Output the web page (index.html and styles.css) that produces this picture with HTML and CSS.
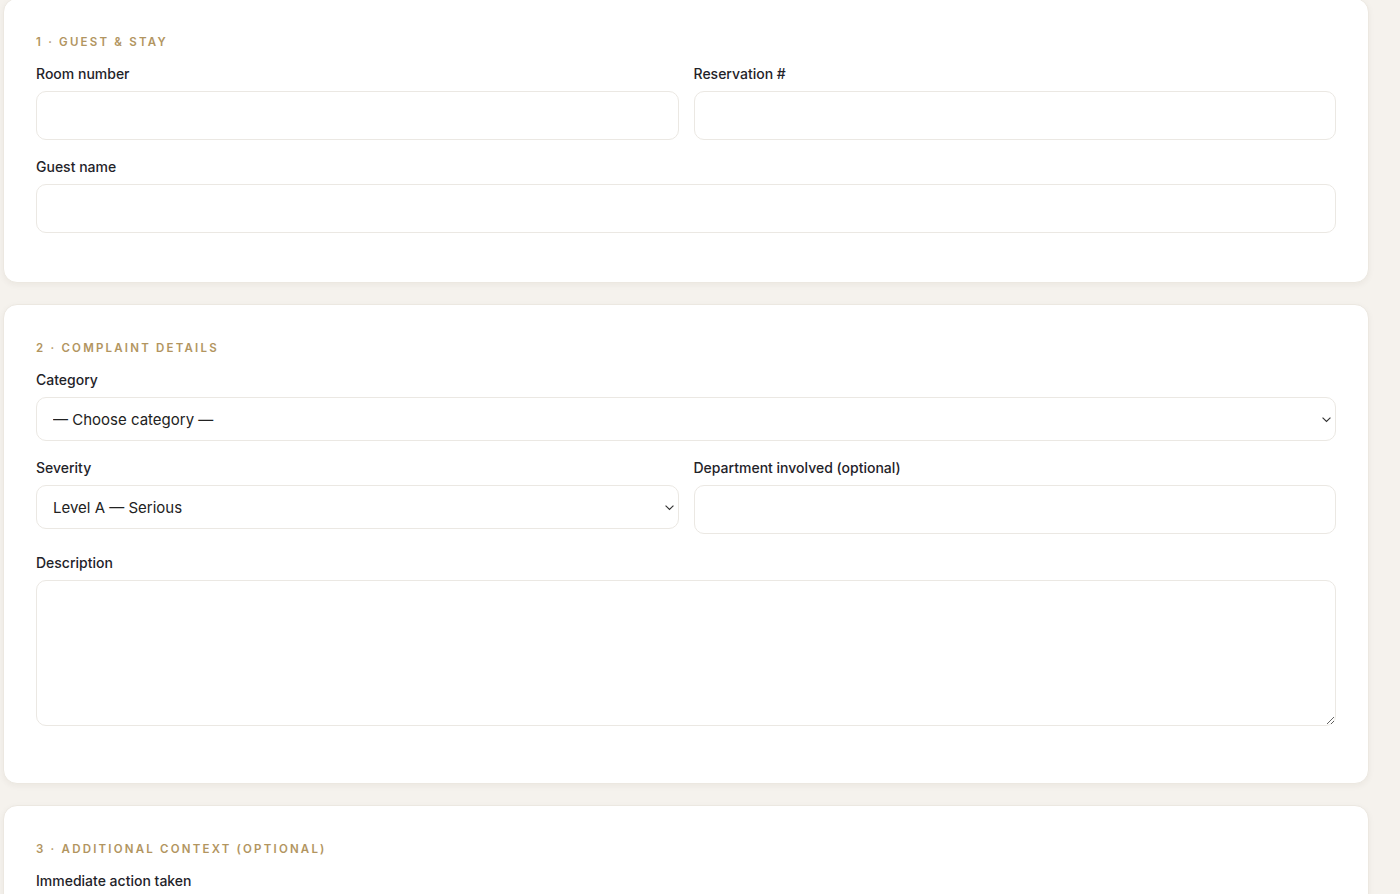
FILE: index.html
```html
<!DOCTYPE html>
<html lang="en">
<head>
<meta charset="utf-8">
<title>Complaint form</title>
<link rel="stylesheet" href="styles.css">
</head>
<body>
<main class="page">
  <section class="card">
    <h2 class="section-title">1 · Guest &amp; Stay</h2>
    <div class="row two">
      <div class="field">
        <label class="label">Room number</label>
        <input class="input" type="text">
      </div>
      <div class="field">
        <label class="label">Reservation #</label>
        <input class="input" type="text">
      </div>
    </div>
    <div class="field">
      <label class="label">Guest name</label>
      <input class="input" type="text">
    </div>
  </section>

  <section class="card">
    <h2 class="section-title">2 · Complaint details</h2>
    <div class="field">
      <label class="label">Category</label>
      <select class="select"><option>— Choose category —</option></select>
    </div>
    <div class="row two row-loose">
      <div class="field">
        <label class="label">Severity</label>
        <select class="select"><option>Level A — Serious</option></select>
      </div>
      <div class="field">
        <label class="label">Department involved (optional)</label>
        <input class="input" type="text">
      </div>
    </div>
    <div class="field">
      <label class="label">Description</label>
      <textarea class="textarea"></textarea>
    </div>
  </section>

  <section class="card">
    <h2 class="section-title">3 · Additional context (optional)</h2>
    <div class="field">
      <label class="label">Immediate action taken</label>
      <input class="input" type="text">
    </div>
  </section>
</main>
</body>
</html>
```

FILE: styles.css
```css
* { box-sizing: border-box; }
html, body { margin: 0; padding: 0; }
body {
  background: #f5f2ed;
  font-family: Inter, "Noto Sans", "Liberation Sans", sans-serif;
  color: #1f2329;
  overflow: hidden;
}
.page {
  padding: 0 31px 40px 3px;
  margin-top: -2px;
  display: flex;
  flex-direction: column;
  gap: 21px;
}
.card {
  background: #ffffff;
  border: 1px solid #ece8e1;
  border-radius: 14px;
  padding: 32px;
  box-shadow: 0 2px 6px rgba(60, 45, 20, 0.05);
}
.section-title {
  margin: 0 0 11px 0;
  font-size: 11.5px;
  line-height: 22px;
  font-weight: 600;
  letter-spacing: 2.2px;
  text-transform: uppercase;
  color: #b2955f;
}
.row.two {
  display: grid;
  grid-template-columns: 1fr 1fr;
  column-gap: 15px;
  align-items: start;
}
.row-loose { margin-bottom: 2px; }
.field {
  display: flex;
  flex-direction: column;
  margin-bottom: 17px;
}
.label {
  font-size: 14px;
  line-height: 20px;
  font-weight: 500;
  color: #1f2329;
  margin-bottom: 7px;
}
.input {
  height: 49px;
  border: 1px solid #ebe8e3;
  border-radius: 10px;
  background: #fff;
  font: inherit;
  font-size: 15px;
  padding: 0 16px;
  outline: none;
}
.select {
  height: 44px;
  border: 1px solid #ebe8e3;
  border-radius: 10px;
  background: #fff url("data:image/svg+xml;utf8,<svg xmlns='http://www.w3.org/2000/svg' width='12' height='8' viewBox='0 0 12 8'><path d='M1.5 1.8 L6 6.2 L10.5 1.8' fill='none' stroke='%23333' stroke-width='1.3'/></svg>") no-repeat right 3px center;
  background-size: 11px 7px;
  -webkit-appearance: none;
  appearance: none;
  font-family: inherit;
  font-size: 15px;
  color: #222;
  padding: 0 16px;
  outline: none;
}
.textarea {
  display: block;
  height: 146px;
  border: 1px solid #ebe8e3;
  border-radius: 10px;
  background: #fff;
  font: inherit;
  padding: 12px 16px;
  resize: vertical;
  outline: none;
  margin-bottom: 8px;
}
```
